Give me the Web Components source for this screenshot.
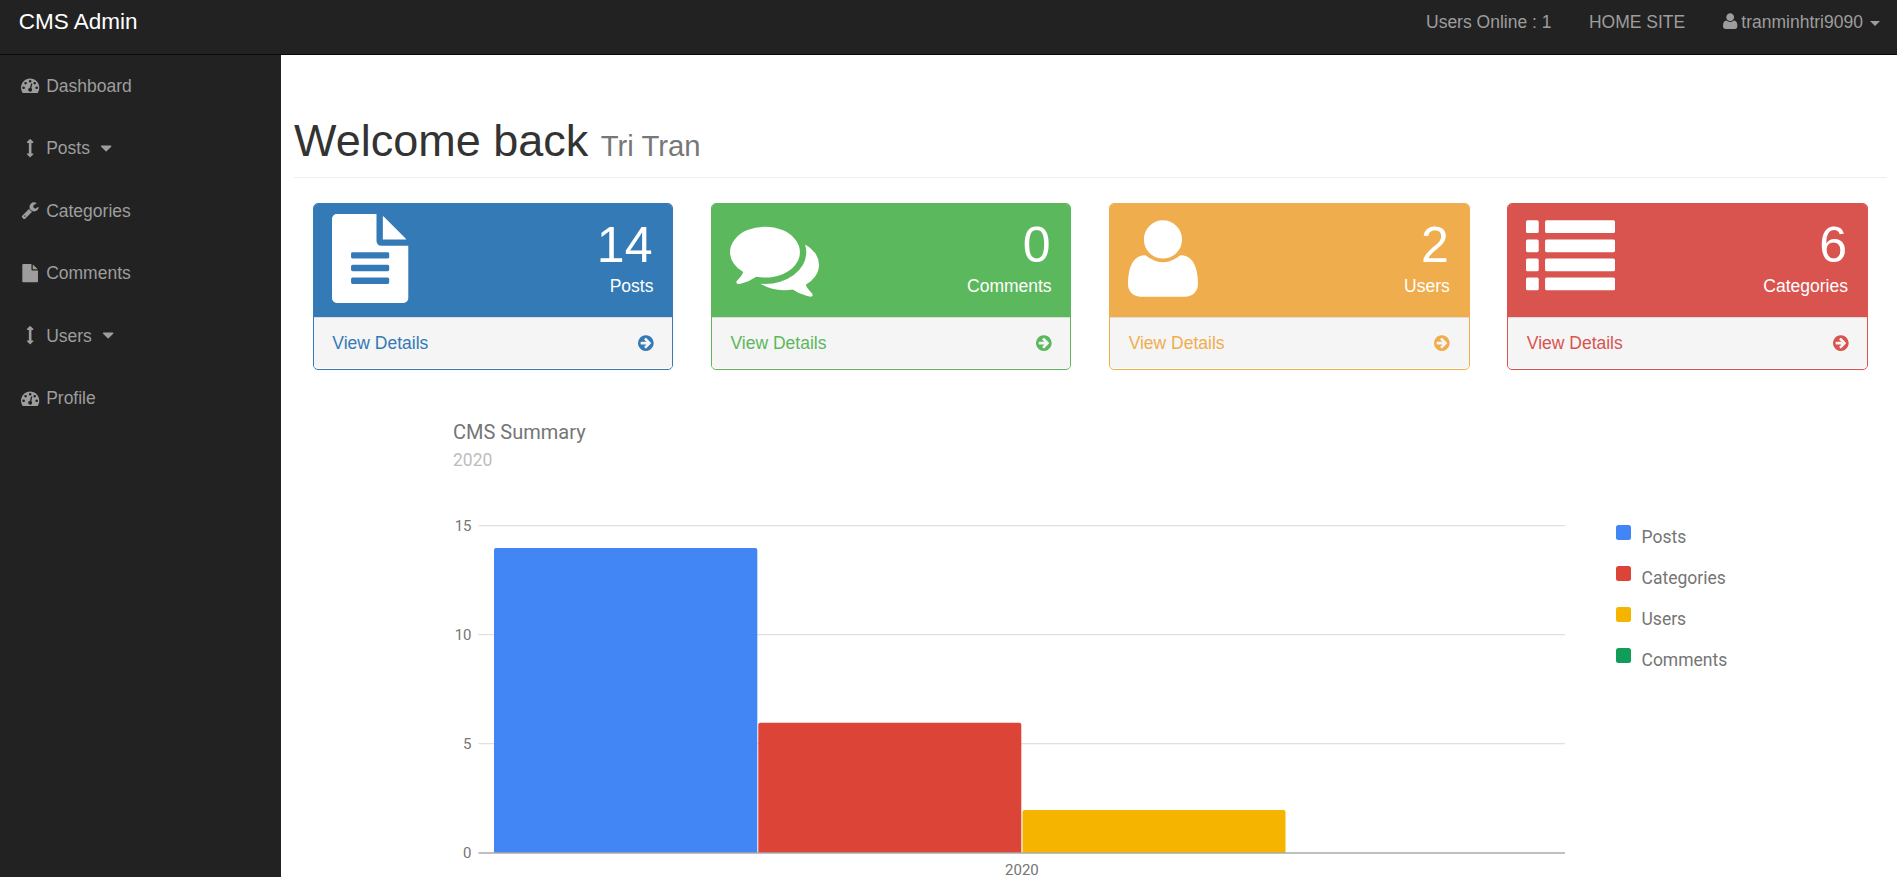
<!DOCTYPE html>
<html lang="en">
<head>
<meta charset="utf-8">
<title>CMS Admin</title>
<style>
html,body{margin:0;height:100%;overflow:hidden;background:#fff}
body{font:17.5px/25px "Liberation Sans",Arial,sans-serif;color:#333}
</style>
</head>
<body>
<cms-app></cms-app>
<script>
const ICONS = {
  tachometer:[1792,'<path d="M384 1152q0-53-37.5-90.5t-90.5-37.5-90.5 37.5-37.5 90.5 37.5 90.5 90.5 37.5 90.5-37.5 37.5-90.5zm192-448q0-53-37.5-90.5t-90.5-37.5-90.5 37.5-37.5 90.5 37.5 90.5 90.5 37.5 90.5-37.5 37.5-90.5zm428 481l101-382q6-26-7.5-48.5t-38.5-29.5-48 6.5-30 39.5l-101 382q-60 5-107 43.5t-63 98.5q-20 77 20 146t117 89 146-20 89-117q16-60-6-117t-72-91zm660-33q0-53-37.5-90.5t-90.5-37.5-90.5 37.5-37.5 90.5 37.5 90.5 90.5 37.5 90.5-37.5 37.5-90.5zm-640-640q0-53-37.5-90.5t-90.5-37.5-90.5 37.5-37.5 90.5 37.5 90.5 90.5 37.5 90.5-37.5 37.5-90.5zm448 192q0-53-37.5-90.5t-90.5-37.5-90.5 37.5-37.5 90.5 37.5 90.5 90.5 37.5 90.5-37.5 37.5-90.5zm320 448q0 261-141 483-19 29-54 29h-1402q-35 0-54-29-141-221-141-483 0-182 71-348t191-286 286-191 348-71 348 71 286 191 191 286 71 348z"/>'],
  arrows:[1792,'<path d="M1216 320q0 26-19 45t-45 19h-128v1024h128q26 0 45 19t19 45-19 45l-256 256q-19 19-45 19t-45-19l-256-256q-19-19-19-45t19-45 45-19h128v-1024h-128q-26 0-45-19t-19-45 19-45l256-256q19-19 45-19t45 19l256 256q19 19 19 45z"/>'],
  wrench:[1792,'<path d="M448 1472q0-26-19-45t-45-19-45 19-19 45 19 45 45 19 45-19 19-45zm644-420l-682 682q-37 37-90 37-52 0-91-37l-106-108q-38-36-38-90 0-53 38-91l681-681q39 98 114.5 173.5t173.5 114.5zm634-435q0 39-23 106-47 134-164.5 217.5t-258.5 83.5q-185 0-316.5-131.5t-131.5-316.5 131.5-316.5 316.5-131.5q58 0 121.5 16.5t107.5 46.5q16 11 16 28t-16 28l-293 169v224l193 107q5-3 79-48.5t135.5-81 70.5-35.5q15 0 23.5 10t8.5 25z"/>'],
  file:[1792,'<path d="M1152 512v-472q22 14 36 28l408 408q14 14 28 36h-472zm-128 32q0 40 28 68t68 28h544v1056q0 40-28 68t-68 28h-1344q-40 0-68-28t-28-68v-1600q0-40 28-68t68-28h800v544z"/>'],
  filetext:[1536,'<path transform="translate(-128)" d="M1596 476q14 14 28 36h-472v-472q22 14 36 28zm-476 164h544v1056q0 40-28 68t-68 28h-1344q-40 0-68-28t-28-68v-1600q0-40 28-68t68-28h800v544q0 40 28 68t68 28zm160 736v-64q0-14-9-23t-23-9h-704q-14 0-23 9t-9 23v64q0 14 9 23t23 9h704q14 0 23-9t9-23zm0-256v-64q0-14-9-23t-23-9h-704q-14 0-23 9t-9 23v64q0 14 9 23t23 9h704q14 0 23-9t9-23zm0-256v-64q0-14-9-23t-23-9h-704q-14 0-23 9t-9 23v64q0 14 9 23t23 9h704q14 0 23-9t9-23z"/>'],
  comments:[1792,'<path d="M1408 768q0 139-94 257t-256.5 186.5-353.5 68.5q-86 0-176-16-124 88-278 128-36 9-86 16h-3q-11 0-20.5-8t-11.5-21q-1-3-1-6.5t.5-6.5 2-6l2.5-5 3.5-5.5 4-5 4.5-5 4-4.5q5-6 23-25t26-29.5 22.5-29 25-38.5 20.5-44q-124-72-195-177t-71-224q0-139 94-257t256.5-186.5 353.5-68.5 353.5 68.5 256.5 186.5 94 257zm384 256q0 120-71 224.5t-195 176.5q10 24 20.5 44t25 38.5 22.5 29 26 29.5 23 25q1 1 4 4.5t4.5 5 4 5 3.5 5.5l2.5 5 2 6 .5 6.5-1 6.5q-3 14-13 22t-22 7q-50-7-86-16-154-40-278-128-90 16-176 16-271 0-472-132 58 4 88 4 161 0 309-45t264-129q125-92 192-212t67-257q0-77-23-152 129 71 204 178t75 230z"/>'],
  user:[1408,'<path transform="matrix(1 0 0 -1 0 1536)" d="M1408 131q0-120-73-189.5t-194-69.5h-874q-121 0-194 69.5t-73 189.5q0 53 3.5 103.5t14 109t26.5 108.5t43 97.5t62 81t85.5 53.5t111.5 20q9 0 42-21.5t74.5-48t108-48t133.5-21.5t133.5 21.5t108 48t74.5 48t42 21.5q61 0 111.5-20t85.5-53.5t62-81t43-97.5t26.5-108.5t14-109t3.5-103.5zM1088 1024q0-159-112.5-271.5t-271.5-112.5t-271.5 112.5t-112.5 271.5t112.5 271.5t271.5 112.5t271.5-112.5t112.5-271.5z"/>'],
  list:[1792,[128,512,896,1280].map(y=>`<rect x="0" y="${y}" width="256" height="256" rx="32"/><rect x="384" y="${y}" width="1408" height="256" rx="32"/>`).join('')],
  go:[1536,'<path transform="translate(-128)" d="M1413 896q0-27-18-45l-91-91-362-362q-18-18-45-18t-45 18l-91 91q-18 18-18 45t18 45l189 189h-502q-26 0-45 19t-19 45v128q0 26 19 45t45 19h502l-189 189q-19 19-19 45t19 45l91 91q18 18 45 18t45-18l362-362 91-91q18-18 18-45zm251 0q0 209-103 385.5t-279.5 279.5-385.5 103-385.5-103-279.5-279.5-103-385.5 103-385.5 279.5-279.5 385.5-103 385.5 103 279.5 279.5 103 385.5z"/>'],
  caret:[1792,'<path d="M1408 704q0 26-19 45l-448 448q-19 19-45 19t-45-19l-448-448q-19-19-19-45t19-45 45-19h896q26 0 45 19t19 45z"/>']
};
const define=(name,render)=>customElements.define(name,class extends HTMLElement{
  connectedCallback(){
    if(this.shadowRoot)return;
    this.attachShadow({mode:'open'}).innerHTML=render(this);
  }
});

define('fa-icon',el=>{
  const [w,body]=ICONS[el.getAttribute('name')];
  return `<style>:host{display:inline-flex;justify-content:center;flex:none;font-size:18.3px}
  :host([fw]){width:22.5px}
  svg{display:block;height:1em;width:${w/1792}em;fill:currentColor;overflow:visible}</style>
  <svg viewBox="0 0 ${w} 1792">${body}</svg>`;
});

define('top-bar',()=>`<style>
  :host{display:flex;justify-content:space-between;height:54px;box-sizing:content-box;background:#222;border-bottom:1px solid #080808;color:#9d9d9d}
  .brand{font-size:22.5px;color:#fff;padding:9px 0 0 18.75px}
  nav{display:flex;padding-right:16.6px}
  span{padding-top:9.5px;display:flex;margin-left:37.5px;height:25px;align-items:center;white-space:pre}
  fa-icon{margin:0 4.2px 1px 0}
  i{border:5px solid transparent;border-top-color:currentColor;border-bottom:0;margin:3px 0 0 7.5px}
</style><div class="brand">CMS Admin</div>
<nav><span>Users Online : 1</span><span>HOME SITE</span><span><fa-icon name="user"></fa-icon>tranminhtri9090<i></i></span></nav>`);

define('nav-item',el=>`<style>
  :host{display:flex;align-items:center;height:62.5px;padding-left:18.75px;color:#9d9d9d}
  .t{margin:0 4.9px}
  fa-icon{margin-bottom:1.5px}
</style><fa-icon fw name="${el.getAttribute('icon')}"></fa-icon><span class="t"><slot></slot></span>${el.hasAttribute('menu')?'<fa-icon fw name="caret"></fa-icon>':''}`);

define('side-nav',()=>`<style>:host{display:block;width:281px;background:#222;flex:none}</style>
  <nav-item icon="tachometer">Dashboard</nav-item>
  <nav-item icon="arrows" menu>Posts</nav-item>
  <nav-item icon="wrench">Categories</nav-item>
  <nav-item icon="file">Comments</nav-item>
  <nav-item icon="arrows" menu>Users</nav-item>
  <nav-item icon="tachometer">Profile</nav-item>`);

define('stat-card',el=>`<style>
  :host{display:block;box-sizing:border-box;height:167px;border:1px solid var(--c);border-radius:5px;background:#fff;overflow:hidden}
  .head{box-sizing:border-box;height:113px;background:var(--c);color:#fff;display:flex;justify-content:space-between;padding:10px 18.75px 0 18.4px}
  .pic{font-size:89px;line-height:1;height:89px}
  .num{font-size:50px;line-height:55px;text-align:right;padding:4px 1px 0 0}
  .lab{text-align:right;padding-top:.5px}
  .foot{box-sizing:border-box;height:51px;border-top:1px solid #ddd;background:#f5f5f5;color:var(--c);display:flex;justify-content:space-between;align-items:center;padding:0 18.4px 0 18.75px}
</style><div class="head"><fa-icon class="pic" name="${el.getAttribute('icon')}"></fa-icon>
<div><div class="num">${el.getAttribute('count')}</div><div class="lab"><slot></slot></div></div></div>
<div class="foot"><span>View Details</span><fa-icon name="go"></fa-icon></div>`);

define('summary-chart',()=>{
  const grid=[[525.5,15],[634.5,10],[743.5,5]];
  const bar=(x,y,w,c)=>`<path fill="${c}" d="M${x} 853V${y+2}q0-2 2-2h${w-4}q2 0 2 2V853z"/>`;
  return `<style>
  :host{display:flex;height:477px;font-family:Roboto,sans-serif}
  svg{display:block;width:1164px;flex:none}
  text{fill:#757575;font-size:15px}
  .title{font-size:20px}.sub{font-size:17.5px;fill:#bdbdbd}
  ul{list-style:none;margin:0;padding:113px 0 0 0}
  li{display:flex;height:41px;color:#757575;line-height:49px;font-size:17.5px}
  li i{width:15px;height:15px;border-radius:2.5px;margin:12.4px 10.5px 0 0}
  </style>
  <svg viewBox="452 400 1164 477" height="477">
  <text class="title" x="453" y="439">CMS Summary</text>
  <text class="sub" x="453" y="466">2020</text>
  ${grid.map(([y,n])=>`<path d="M478.5 ${y}H1565" stroke="#e0e0e0" stroke-width="1.25"/><text x="471.5" y="${y+5.3}" text-anchor="end">${n}</text>`).join('')}
  ${bar(494,548,263.3,'#4285f4')}${bar(758.3,722.7,263,'#db4437')}${bar(1022.5,810,263,'#f4b400')}
  <path d="M478.5 853H1565" stroke="#aaa" stroke-width="1.5"/>
  <text x="471.5" y="858.3" text-anchor="end">0</text>
  <text x="1021.9" y="875" text-anchor="middle">2020</text>
  </svg>
  <ul>${[['Posts','#4285f4'],['Categories','#db4437'],['Users','#f4b400'],['Comments','#0f9d58']].map(([t,c])=>`<li><i style="background:${c}"></i>${t}</li>`).join('')}</ul>`;
});

define('cms-app',()=>`<style>
  :host{display:flex;flex-direction:column;height:877px;overflow:hidden}
  .body{display:flex;flex:1;min-height:0}
  main{flex:1;min-width:0;padding:0 10px 0 13px}
  h1{font-size:45px;line-height:50px;font-weight:400;margin:0;padding:61px 0 11px;border-bottom:1px solid #eee}
  small{font-size:29.25px;line-height:1;color:#777}
  .cards{display:grid;grid-template-columns:repeat(4,1fr);gap:37.5px;padding:25px 19.3px 0 18.55px}
  summary-chart{margin:30px 0 0 158px}
</style><top-bar></top-bar>
<div class="body"><side-nav></side-nav><main>
<h1>Welcome back <small>Tri Tran</small></h1>
<div class="cards">
<stat-card icon="filetext" count="14" style="--c:#337ab7">Posts</stat-card>
<stat-card icon="comments" count="0" style="--c:#5cb85c">Comments</stat-card>
<stat-card icon="user" count="2" style="--c:#f0ad4e">Users</stat-card>
<stat-card icon="list" count="6" style="--c:#d9534f">Categories</stat-card>
</div>
<summary-chart></summary-chart>
</main></div>`);
</script>
</body>
</html>
